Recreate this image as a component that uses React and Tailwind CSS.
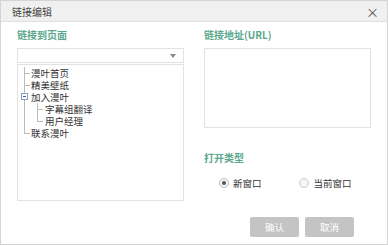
import React from "react";

const font = { fontFamily: '"Noto Sans CJK SC", "Noto Sans", sans-serif' };

function Row({ level = 0, last = false, children, toggle = false }) {
  return (
    <div className="relative h-[12px] flex items-center">
      {level === 0 ? (
        <div className="w-[11px] h-full relative shrink-0">
          {toggle ? (
            <div className="absolute left-[1px] top-[2px] w-[7px] h-[7px] border border-[#8aa0c0] bg-white flex items-center justify-center">
              <div className="w-[3px] h-px bg-[#4060a0]" />
            </div>
          ) : (
            <div className="absolute left-[4px] top-[6px] w-[6px] border-t border-[#bbb]" />
          )}
        </div>
      ) : (
        <div className="w-[25px] h-full relative shrink-0">
          <div className={"absolute left-[17px] top-0 border-l border-[#bbb] " + (last ? "h-[6px]" : "h-full")} />
          <div className="absolute left-[17px] top-[6px] w-[6px] border-t border-[#bbb]" />
        </div>
      )}
      <span className="text-[9.5px] leading-[11px] text-[#333]">{children}</span>
    </div>
  );
}

export default function App() {
  return (
    <div style={font} className="w-[388px] h-[245px] bg-white border border-[#d4d4d4] flex flex-col">
      <div className="h-[21px] bg-[#f0f0f0] border-b border-[#e0e0e0] flex items-center justify-between pl-[11px] pr-[8px] shrink-0">
        <span className="text-[10px] text-[#444]">链接编辑</span>
        <span className="text-[13px] text-[#555] leading-none">×</span>
      </div>
      <div className="flex flex-1">
        <div className="w-[187px] pl-[16px] pt-[6px] flex flex-col">
          <div className="text-[10px] font-bold text-[#5aa78c] h-[14px] leading-[14px]">链接到页面</div>
          <div className="mt-[6px] w-[167px] h-[15px] border border-[#e2e2e2] relative">
            <div className="absolute right-[7px] top-[5px] w-0 h-0 border-l-[3.5px] border-r-[3.5px] border-t-[4px] border-l-transparent border-r-transparent border-t-[#888]" />
          </div>
          <div className="mt-[1px] w-[167px] h-[137px] border border-[#e2e2e2] pl-[2px] pt-[2px] relative">
            <div className="absolute left-[6px] top-[2px] h-[66px] border-l border-[#bbb]" />
            <Row>漫叶首页</Row>
            <Row>精美壁纸</Row>
            <Row toggle>加入漫叶</Row>
            <Row level={1}>字幕组翻译</Row>
            <Row level={1} last>用户经理</Row>
            <Row>联系漫叶</Row>
          </div>
        </div>
        <div className="flex-1 pl-[16px] pt-[6px] flex flex-col">
          <div className="text-[10px] font-bold text-[#5aa78c] h-[14px] leading-[14px]">链接地址(URL)</div>
          <div className="mt-[6px] w-[167px] h-[80px] border border-[#e2e2e2]" />
          <div className="mt-[23px] text-[10px] font-bold text-[#5aa78c] h-[14px] leading-[14px]">打开类型</div>
          <div className="mt-[11px] flex items-center pl-[15px] h-[14px]">
            <div className="w-[10px] h-[10px] rounded-full border border-[#bbb] bg-[#f4f4f4] flex items-center justify-center">
              <div className="w-[4px] h-[4px] rounded-full bg-[#555]" />
            </div>
            <span className="ml-[4px] text-[9.5px] text-[#333]">新窗口</span>
            <div className="ml-[37px] w-[10px] h-[10px] rounded-full border border-[#ccc] bg-[#f4f4f4]" />
            <span className="ml-[5px] text-[9.5px] text-[#333]">当前窗口</span>
          </div>
          <div className="mt-[27px] flex pl-[46px] gap-[6px]">
            <div className="w-[49px] h-[20px] rounded-[2px] bg-[#c4c4c4] flex items-center justify-center text-[9.5px] text-white">确认</div>
            <div className="w-[49px] h-[20px] rounded-[2px] bg-[#c4c4c4] flex items-center justify-center text-[9.5px] text-white">取消</div>
          </div>
        </div>
      </div>
    </div>
  );
}
